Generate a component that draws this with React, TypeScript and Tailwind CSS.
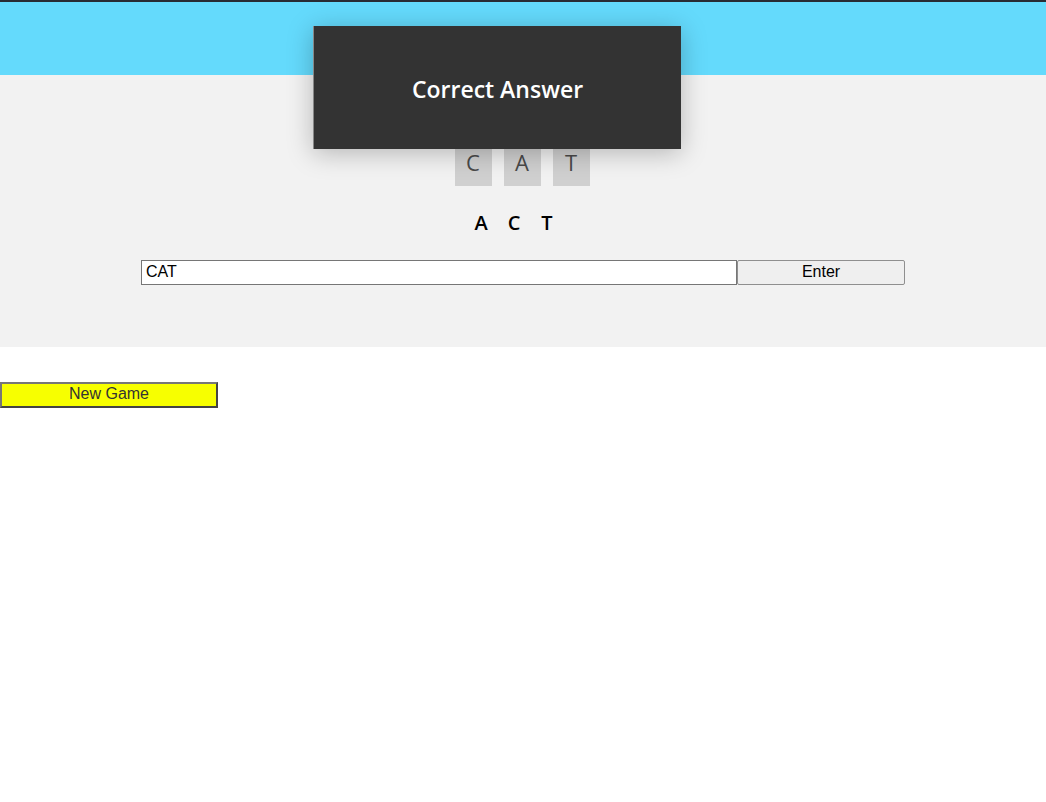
import { useState } from 'react'

const word = ['C', 'A', 'T']
const scrambled = ['A', 'C', 'T']

export default function App() {
  const [guess, setGuess] = useState('CAT')

  return (
    <div className="min-h-screen bg-white border-t-2 border-[#282c34] font-['Open_Sans',sans-serif]">
      <header className="h-[73px] bg-[#64dafc]" />

      <section className="h-[272px] bg-[#f2f2f2] flex flex-col items-center">
        <div className="mt-[55px] flex gap-[12px] pr-[2px]">
          {word.map((l, i) => (
            <div key={i} className="w-[37px] h-[56px] bg-[#d0d0d0] flex items-center justify-center text-[22px] text-[#4a4a4a] pt-[8px]">
              {l}
            </div>
          ))}
        </div>

        <div className="mt-[23px] flex pr-[18px] text-[20px] font-semibold text-black leading-[28px]">
          {scrambled.map((l, i) => (
            <span key={i} className="w-[33px] text-center">{l}</span>
          ))}
        </div>

        <form className="mt-[23px] flex font-['Liberation_Sans',Arial,sans-serif] text-[16px] leading-[18px]" onSubmit={e => e.preventDefault()}>
          <input
            value={guess}
            onChange={e => setGuess(e.target.value)}
            className="w-[596px] h-[25px] bg-white border border-[#767676] px-[4px] pb-[1px] text-black outline-none"
          />
          <button className="w-[168px] h-[25px] bg-[#efefef] border border-[#8f8f8f] rounded-[2px] text-black pb-[2px]">
            Enter
          </button>
        </form>
      </section>

      <button className="mt-[35px] w-[218px] h-[26px] bg-[#f7ff00] border-2 border-t-[#777] border-l-[#777] border-r-[#444] border-b-[#444] text-[16px] leading-[18px] pb-[2px] text-[#333] font-['Liberation_Sans',Arial,sans-serif]">
        New Game
      </button>

      <div className="absolute left-[313px] top-[26px] w-[368px] h-[123px] bg-[#333] border-l border-[#888] shadow-[0_4px_24px_rgba(0,0,0,0.25)] flex items-center justify-center">
        <span className="text-white text-[23px] font-semibold pt-[3px]">Correct Answer</span>
      </div>
    </div>
  )
}
